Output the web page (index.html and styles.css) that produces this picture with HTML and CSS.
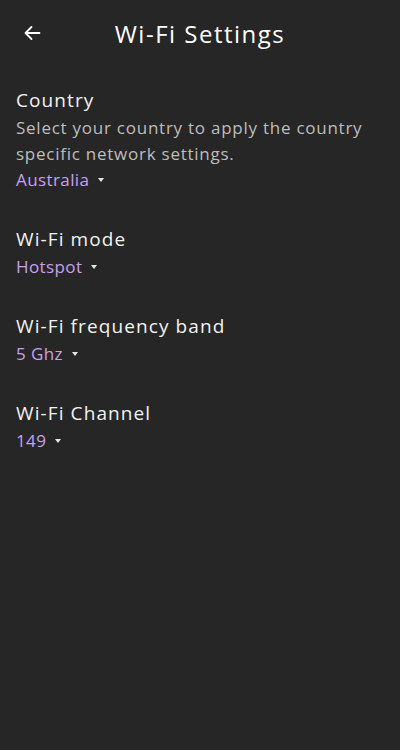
FILE: index.html
```html
<!DOCTYPE html>
<html>
<head>
<meta charset="utf-8">
<link rel="stylesheet" href="styles.css">
</head>
<body>
<div class="screen">
  <header class="topbar">
    <button class="back" aria-label="Back">
      <svg width="24" height="24" viewBox="0 0 24 24"><path d="M19.5 12H5.5M11.5 6l-6 6 6 6" fill="none" stroke="#fff" stroke-width="1.8" stroke-linecap="round" stroke-linejoin="round"/></svg>
    </button>
    <h1 class="title">Wi-Fi Settings</h1>
  </header>
  <main class="content">
    <section class="setting">
      <div class="label">Country</div>
      <p class="desc">Select your country to apply the country specific network settings.</p>
      <div class="value">Australia <span class="caret"></span></div>
    </section>
    <section class="setting">
      <div class="label">Wi-Fi mode</div>
      <div class="value">Hotspot <span class="caret"></span></div>
    </section>
    <section class="setting">
      <div class="label">Wi-Fi frequency band</div>
      <div class="value">5 Ghz <span class="caret"></span></div>
    </section>
    <section class="setting">
      <div class="label">Wi-Fi Channel</div>
      <div class="value">149 <span class="caret"></span></div>
    </section>
  </main>
</div>
</body>
</html>
```
FILE: styles.css
```css
html, body {
  margin: 0;
  padding: 0;
  background: #262626;
}
body {
  font-family: "Open Sans", "Noto Sans", sans-serif;
  color: #ffffff;
}
.screen {
  width: 400px;
  min-height: 750px;
  background: #262626;
}
.topbar {
  display: flex;
  align-items: center;
  height: 66px;
}
.back {
  background: none;
  border: 0;
  padding: 0;
  margin-left: 20px;
  width: 24px;
  height: 24px;
  display: flex;
}
.title {
  flex: 1;
  margin: 0;
  text-align: center;
  font-size: 24px;
  font-weight: 400;
  letter-spacing: 1.5px;
  padding-right: 44px;
  color: #fff;
}
.content {
  padding: 20px 16px 0;
  display: flex;
  flex-direction: column;
  gap: 32px;
}
.setting {
  display: flex;
  flex-direction: column;
}
.label {
  font-size: 19px;
  line-height: 29px;
  color: #f2f2f2;
  letter-spacing: 1.1px;
}
.desc {
  margin: 0;
  font-size: 17px;
  line-height: 26px;
  color: #bdbdbd;
  letter-spacing: 0.75px;
}
.value {
  font-size: 17px;
  line-height: 26px;
  color: #c7a1ec;
  letter-spacing: 0.4px;
  display: flex;
  align-items: center;
  gap: 4px;
}
.caret {
  display: inline-block;
  width: 0;
  height: 0;
  border-left: 3.5px solid transparent;
  border-right: 3.5px solid transparent;
  border-top: 4px solid #e6e6e6;
  margin-left: 5px;
}
```
